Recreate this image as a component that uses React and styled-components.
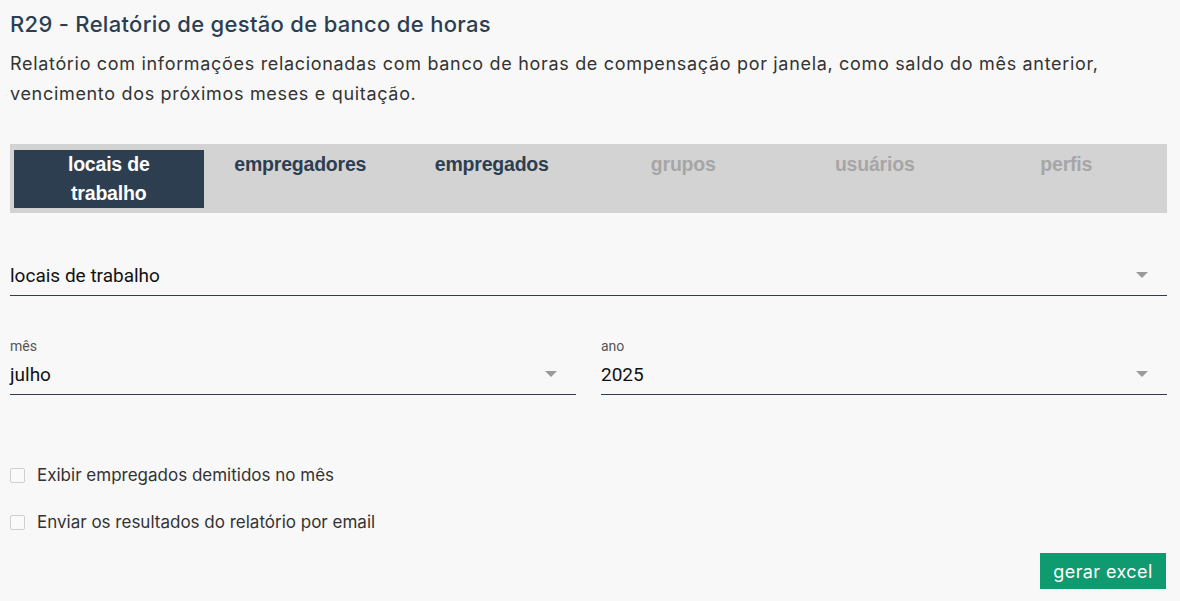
import React from "react";
import styled, { createGlobalStyle } from "styled-components";

const Global = createGlobalStyle`
  html, body { margin: 0; padding: 0; background: #f8f8f8; }
  body { font-family: Inter, "Noto Sans", sans-serif; }
`;

const Page = styled.div`
  padding: 8px 13px 0 10px;
  display: flex;
  flex-direction: column;
`;

const Title = styled.h1`
  margin: 0;
  font-family: Inter, sans-serif;
  font-size: 22px;
  font-weight: 500;
  color: #2c3e50;
  line-height: 32px;
  letter-spacing: 0.3px;
`;

const Description = styled.p`
  margin: 9px 0 0;
  font-size: 18px;
  line-height: 30px;
  color: #333;
  letter-spacing: 0.68px;
`;

const TabBar = styled.div`
  margin-top: 35px;
  background: #d3d3d3;
  padding: 6px 4px 6px 4px;
  display: grid;
  grid-template-columns: repeat(6, 1fr);
  height: 57px;
`;

const Tab = styled.div`
  background: ${(p) => (p.$active ? "#2d3e50" : "transparent")};
  color: ${(p) => (p.$active ? "#fff" : p.$disabled ? "#a6a6a6" : "#2d3e50")};
  font-family: "Liberation Sans", Arial, sans-serif;
  font-weight: bold;
  font-size: 19.5px;
  line-height: 29px;
  text-align: center;
  margin-right: 2px;
  letter-spacing: -0.2px;
`;

const Field = styled.div`
  display: flex;
  flex-direction: column;
  margin-top: ${(p) => p.$mt || 0}px;
`;

const Label = styled.div`
  font-family: Roboto, sans-serif;
  font-size: 14px;
  color: #555;
  line-height: 16px;
  height: 16px;
`;

const SelectBox = styled.div`
  display: flex;
  align-items: center;
  justify-content: space-between;
  height: 40px;
  border-bottom: 1px solid #2d3e50;
  font-family: Roboto, sans-serif;
  font-size: 19px;
  color: #111;
  padding-right: 19px;
`;

const Arrow = styled.span`
  width: 0;
  height: 0;
  border-left: 6px solid transparent;
  border-right: 6px solid transparent;
  border-top: 6px solid #9a9a9a;
`;

const Row = styled.div`
  display: grid;
  grid-template-columns: 1fr 1fr;
  column-gap: 25px;
  margin-top: 42px;
`;

const Checks = styled.div`
  display: flex;
  flex-direction: column;
  gap: 27px;
  margin-top: 70px;
`;

const CheckRow = styled.label`
  display: flex;
  align-items: center;
  gap: 12px;
  font-size: 17px;
  color: #333;
  line-height: 20px;
`;

const Box = styled.span`
  width: 13px;
  height: 13px;
  border: 1px solid #cfcfcf;
  border-radius: 2px;
  background: #fafafa;
`;

const Footer = styled.div`
  display: flex;
  justify-content: flex-end;
  margin-top: 21px;
`;

const Button = styled.button`
  background: #109a6f;
  color: #fff;
  border: none;
  height: 36px;
  width: 126px;
  padding: 0;
  font-family: Inter, sans-serif;
  font-size: 18px;
  letter-spacing: 0.4px;
  margin-right: 1px;
  cursor: pointer;
`;

function Select({ label, value }) {
  return (
    <Field>
      {label && <Label>{label}</Label>}
      <SelectBox>
        <span>{value}</span>
        <Arrow />
      </SelectBox>
    </Field>
  );
}

export default function App() {
  const tabs = [
    { t: ["locais de", "trabalho"], active: true },
    { t: ["empregadores"] },
    { t: ["empregados"] },
    { t: ["grupos"], disabled: true },
    { t: ["usuários"], disabled: true },
    { t: ["perfis"], disabled: true },
  ];
  return (
    <>
      <Global />
      <Page>
        <Title>R29 - Relatório de gestão de banco de horas</Title>
        <Description>
          Relatório com informações relacionadas com banco de horas de compensação por janela, como saldo do mês anterior,
          <br />
          vencimento dos próximos meses e quitação.
        </Description>
        <TabBar>
          {tabs.map((tab, i) => (
            <Tab key={i} $active={tab.active} $disabled={tab.disabled}>
              {tab.t.map((l, j) => (
                <div key={j}>{l}</div>
              ))}
            </Tab>
          ))}
        </TabBar>
        <Field $mt={42}>
          <Select value="locais de trabalho" />
        </Field>
        <Row>
          <Select label="mês" value="julho" />
          <Select label="ano" value="2025" />
        </Row>
        <Checks>
          <CheckRow>
            <Box />
            Exibir empregados demitidos no mês
          </CheckRow>
          <CheckRow>
            <Box />
            Enviar os resultados do relatório por email
          </CheckRow>
        </Checks>
        <Footer>
          <Button>gerar excel</Button>
        </Footer>
      </Page>
    </>
  );
}
